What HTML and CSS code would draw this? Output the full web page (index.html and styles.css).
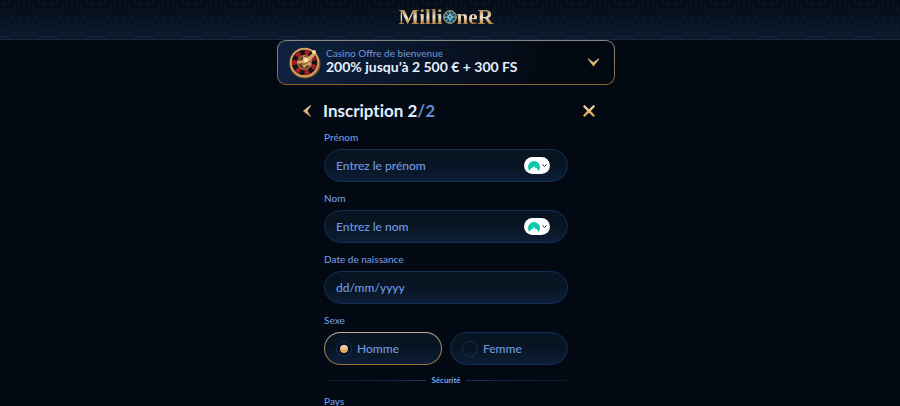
FILE: index.html
```html
<!DOCTYPE html>
<html lang="fr">
<head>
    <meta charset="UTF-8">
    <meta name="viewport" content="width=device-width, initial-scale=1.0">
    <title>Millioner - Inscription</title>
    <link rel="stylesheet" href="styles.css">
</head>
<body>
    <svg class="defs" width="0" height="0" aria-hidden="true">
        <defs>
            <linearGradient id="gold" x1="0" y1="0" x2="0" y2="1">
                <stop offset="0" stop-color="#f8dfb8"/>
                <stop offset="1" stop-color="#d99a45"/>
            </linearGradient>
            <symbol id="vpn" viewBox="0 0 12 12">
                <path d="M1.5 11A6 6 0 1 1 10.5 11L8.6 7.8L7.8 8.4L6 6L4.2 8.4L3.4 7.8Z" fill="#0cc9ac"/>
            </symbol>
        </defs>
    </svg>

    <header class="header">
        <svg class="header-pattern" aria-hidden="true">
            <defs>
                <pattern id="tiles" width="48" height="40" patternUnits="userSpaceOnUse">
                    <path d="M0 4h9v-4M4 0v8l5 4h5V4l5-4M0 12h5l4-4M19 0v8h-5M24 0v13M48 4h-9v-4M44 0v8l-5 4h-5V4l-5-4M48 12h-5l-4-4M29 0v8h5M0 23h10v6H4v8M48 23H38v6h6v8M14 23v14M34 23v14M19 37v-8l5-5 5 5v8M0 37h11l4-4h18l4 4h11M4 15l3 3-3 3M44 15l-3 3 3 3" fill="none" stroke="#1b3048" stroke-width="1"/>
                    <path d="M12 15l3 3-3 3-3-3zM20 15l3 3-3 3-3-3zM28 15l3 3-3 3-3-3zM36 15l3 3-3 3-3-3z" fill="#102034"/>
                </pattern>
            </defs>
            <rect width="100%" height="100%" fill="url(#tiles)"/>
        </svg>
        <a class="logo" href="#" aria-label="Millioner">
            <span class="logo-text"><span class="logo-big">M</span>illi</span>
            <svg class="logo-gem" viewBox="0 0 14 14" aria-hidden="true">
                <circle cx="7" cy="7" r="6.3" fill="#194e66" stroke="#d8ba80" stroke-width="1"/>
                <path d="M7 1v12M1 7h12M3 3l8 8M11 3l-8 8" stroke="#6fa9b2" stroke-width="1"/>
                <path d="M7 3l1.2 2.8L11 7 8.2 8.2 7 11 5.8 8.2 3 7l2.8-1.2z" fill="#8fc8c8"/>
                <circle cx="7" cy="7" r="1.2" fill="#237084"/>
            </svg>
            <span class="logo-text">ne<span class="logo-big">R</span></span>
        </a>
    </header>

    <main class="page">
        <div class="signup">
            <button class="offer" type="button">
                <svg class="offer-icon" viewBox="0 0 32 32" aria-hidden="true">
                    <ellipse cx="16" cy="17" rx="15.5" ry="14.5" fill="#83501f"/>
                    <circle cx="15.5" cy="15.5" r="14.8" fill="#d3a366"/>
                    <circle cx="15.5" cy="15.5" r="12.8" fill="#4d2915"/>
                    <g transform="rotate(12 15.5 15.5)" fill="none" stroke-width="5.4">
                        <circle cx="15.5" cy="15.5" r="9.8" stroke="#171313"/>
                        <circle cx="15.5" cy="15.5" r="9.8" stroke="#a81d25" stroke-dasharray="4.4 4.4"/>
                    </g>
                    <circle cx="15.5" cy="15.5" r="7" fill="#6b4225" stroke="#b9874d"/>
                    <path d="M9 14l5-1 0-4 4 2 7-6 2 2-6 7 1 5-4-1-3 3-2-4-5-1z" fill="#d7a566"/>
                    <circle cx="17" cy="13" r="2.4" fill="#f6dcaa"/>
                    <path d="M12 16q4 3 8-2" stroke="#704016" fill="none"/>
                    <circle cx="25" cy="5" r="2" fill="#f9dfaa"/>
                </svg>
                <span class="offer-text">
                    <span class="offer-label">Casino Offre de bienvenue</span>
                    <strong class="offer-value">200% jusqu’à 2 500 € + 300 FS</strong>
                </span>
                <svg class="offer-arrow" viewBox="0 0 10 8" aria-hidden="true">
                    <path d="M0 .5L5 4l5-3.5L5 7.500z" fill="url(#gold)" stroke="url(#gold)" stroke-width=".5"/>
                </svg>
            </button>

            <div class="title-bar">
                <button class="icon-button" type="button" aria-label="Retour">
                    <svg width="8" height="12" viewBox="0 0 8 12"><path d="M7.5 .5L4 6l3.500 5.500L.5 6z" fill="url(#gold)" stroke="url(#gold)" stroke-width=".8"/></svg>
                </button>
                <h1 class="title">Inscription 2<span class="title-total">/2</span></h1>
                <button class="icon-button" type="button" aria-label="Fermer">
                    <svg width="12" height="12" viewBox="0 0 12 12"><path d="M1.5 0L6 4.2 10.5 0 12 1.5 7.8 6 12 10.5 10.5 12 6 7.8 1.5 12 0 10.5 4.2 6 0 1.5z" fill="url(#gold)"/></svg>
                </button>
            </div>

            <form class="form">
                <div class="field">
                    <label class="label" for="prenom">Prénom</label>
                    <div class="control">
                        <input class="input" id="prenom" type="text" placeholder="Entrez le prénom">
                        <button class="autofill" type="button" aria-label="Remplir le prénom">
                            <svg width="12" height="12"><use href="#vpn"/></svg>
                            <svg width="5" height="4" viewBox="0 0 5 4"><path d="M.5 .5l2 2 2-2" fill="none" stroke="#222"/></svg>
                        </button>
                    </div>
                </div>
                <div class="field">
                    <label class="label" for="nom">Nom</label>
                    <div class="control">
                        <input class="input" id="nom" type="text" placeholder="Entrez le nom">
                        <button class="autofill" type="button" aria-label="Remplir le nom">
                            <svg width="12" height="12"><use href="#vpn"/></svg>
                            <svg width="5" height="4" viewBox="0 0 5 4"><path d="M.5 .5l2 2 2-2" fill="none" stroke="#222"/></svg>
                        </button>
                    </div>
                </div>
                <div class="field">
                    <label class="label" for="naissance">Date de naissance</label>
                    <div class="control">
                        <input class="input" id="naissance" type="text" placeholder="dd/mm/yyyy">
                    </div>
                </div>
                <fieldset class="field">
                    <legend class="label">Sexe</legend>
                    <div class="choices">
                        <label class="choice choice-active"><input class="radio" type="radio" name="sexe" checked>Homme</label>
                        <label class="choice"><input class="radio" type="radio" name="sexe">Femme</label>
                    </div>
                </fieldset>
                <div class="divider">Sécurité</div>
                <div class="field">
                    <label class="label" for="pays">Pays</label>
                    <div class="control">
                        <select class="input" id="pays"><option>France</option></select>
                    </div>
                </div>
            </form>
        </div>
    </main>
</body>
</html>
```
FILE: styles.css
```css
* {
    box-sizing: border-box;
}
html {
    scrollbar-width: none;
}
body {
    margin: 0;
    background: #030912;
    color: #7fa5e5;
    font-family: Lato, "Liberation Sans", sans-serif;
    font-variant-ligatures: none;
}
button {
    padding: 0;
    border: none;
    background: none;
    font-family: inherit;
    cursor: pointer;
}
svg {
    display: block;
    flex-shrink: 0;
}
.defs {
    position: absolute;
}
.header {
    position: relative;
    display: flex;
    justify-content: center;
    height: 40px;
    padding: 5px 8px 0 0;
    border-bottom: 1px solid #14253e;
    background: linear-gradient(#040a14, #0a192b);
}
.header-pattern {
    position: absolute;
    inset: 0;
    width: 100%;
    height: 100%;
    opacity: 0.35;
}
.logo {
    position: relative;
    display: flex;
    align-items: center;
    height: 24px;
    text-decoration: none;
}
.logo-text {
    font: bold 21px/24px "Liberation Serif", serif;
    color: transparent;
    background: linear-gradient(#a07540 15%, #f3e3c4 50%, #b07a38 80%);
    background-clip: text;
    -webkit-background-clip: text;
}
.logo-big {
    font-size: 22px;
}
.logo-gem {
    width: 14px;
    height: 14px;
}
.page {
    padding-right: 8px;
}
.signup {
    max-width: 338px;
    margin: 0 auto;
}
.offer {
    display: flex;
    align-items: center;
    width: 100%;
    height: 45px;
    padding: 0 15px 0 11px;
    border: 1px solid transparent;
    border-radius: 9px;
    background: linear-gradient(100deg, #0f2240, #030912 80%) padding-box, linear-gradient(#858786, #92662f) border-box;
    text-align: left;
}
.offer-icon {
    width: 32px;
    height: 32px;
    margin-right: 5px;
}
.offer-text {
    flex: 1;
    padding-bottom: 4px;
}
.offer-label {
    display: block;
    color: #7196dc;
    font-size: 10px;
    line-height: 12px;
}
.offer-value {
    display: block;
    color: #e3efff;
    font-size: 14px;
    line-height: 16px;
    font-weight: bold;
}
.offer-arrow {
    width: 11px;
    height: 9px;
}
.title-bar {
    display: flex;
    align-items: center;
    gap: 12px;
    padding: 14px 20px 8px 26px;
}
.title {
    flex: 1;
    margin: 0;
    color: #e0edff;
    font-size: 17px;
    line-height: 24px;
    font-weight: bold;
}
.title-total {
    color: #648ddb;
}
.form {
    display: flex;
    flex-direction: column;
    gap: 10px;
    padding: 0 47px 20px;
}
.field {
    min-width: 0;
    margin: 0;
    padding: 0;
    border: none;
}
.label {
    display: block;
    padding: 0;
    margin-bottom: 6px;
    color: #7199e1;
    font-size: 10px;
    line-height: 12px;
    font-weight: 500;
}
.control {
    position: relative;
}
.input {
    display: block;
    width: 100%;
    height: 33px;
    padding: 0 11px;
    border: 1px solid #132f56;
    border-radius: 17px;
    background: linear-gradient(#081421 45%, #0d1e38);
    color: #7fa5e5;
    font-family: inherit;
    font-size: 12px;
    font-weight: 500;
}
.input::placeholder {
    color: #7199e1;
}
.autofill {
    position: absolute;
    top: 8px;
    right: 18px;
    display: flex;
    align-items: center;
    justify-content: center;
    gap: 2px;
    width: 26px;
    height: 17px;
    border-radius: 9px;
    background: #fff;
}
.choices {
    display: grid;
    grid-template-columns: 1fr 1fr;
    gap: 8px;
}
.choice {
    display: flex;
    align-items: center;
    gap: 5px;
    height: 33px;
    padding-left: 11px;
    border: 1px solid #132f56;
    border-radius: 17px;
    background: linear-gradient(#081421 45%, #0d1e38);
    color: #7199e1;
    font-size: 12px;
    font-weight: 500;
}
.choice-active {
    border-color: transparent;
    background: linear-gradient(#081421 45%, #0d1e38) padding-box, linear-gradient(#b9ad9e, #a16f2c) border-box;
}
.radio {
    appearance: none;
    width: 16px;
    height: 16px;
    margin: 0;
    border: 1px solid #132f56;
    border-radius: 50%;
}
.radio:checked {
    padding: 3px;
    background: linear-gradient(#f8dfb8, #d99a45) content-box;
}
.divider {
    display: flex;
    align-items: center;
    gap: 5px;
    font-size: 8px;
    line-height: 10px;
    font-weight: bold;
}
.divider::before,
.divider::after {
    content: "";
    flex: 1;
    height: 1px;
    background: linear-gradient(to right, #081525, #19345b);
}
.divider::after {
    background: linear-gradient(to left, #081525, #19345b);
}
```
